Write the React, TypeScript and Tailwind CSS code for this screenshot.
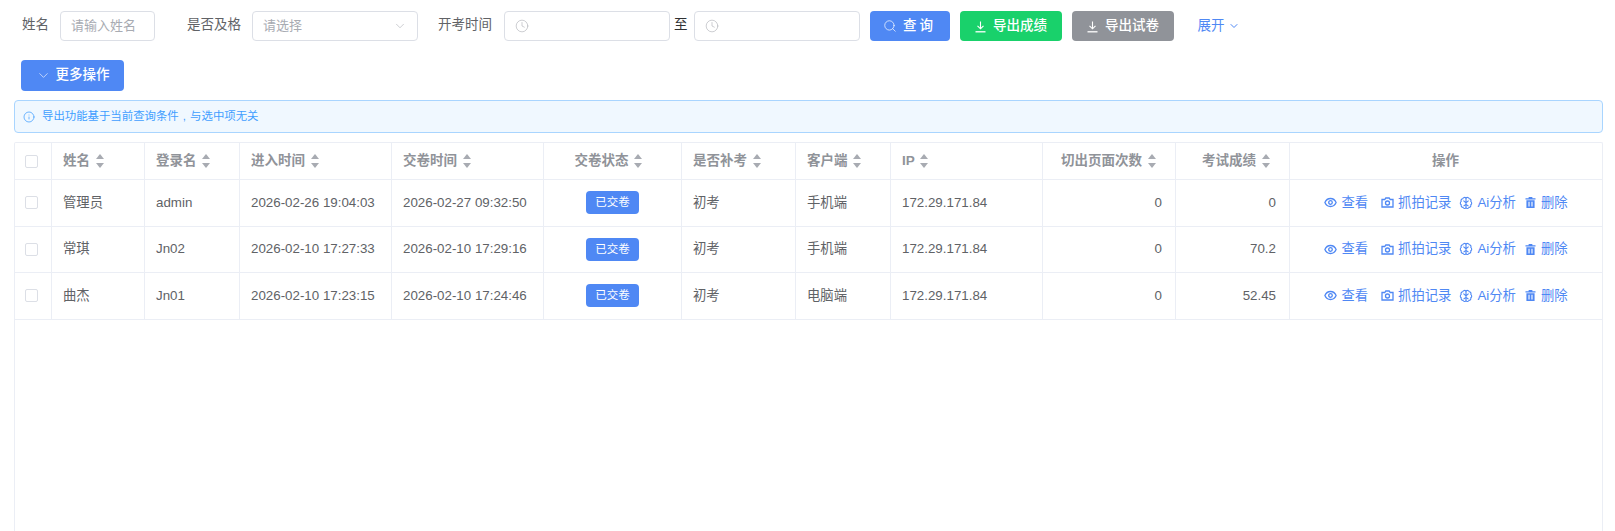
import { ChevronDown, Info, Search, Clock } from "lucide-react";

const font = "font-['Liberation_Sans','Noto_Sans_CJK_SC',sans-serif]";

const rows = [
  { name: "管理员", login: "admin", enter: "2026-02-26 19:04:03", submit: "2026-02-27 09:32:50", client: "手机端", score: "0" },
  { name: "常琪", login: "Jn02", enter: "2026-02-10 17:27:33", submit: "2026-02-10 17:29:16", client: "手机端", score: "70.2" },
  { name: "曲杰", login: "Jn01", enter: "2026-02-10 17:23:15", submit: "2026-02-10 17:24:46", client: "电脑端", score: "52.45" },
];

function SortCaret() {
  return (
    <span className="ml-[5px] mr-[7px] inline-flex h-[14px] w-[9px] flex-col items-center justify-between align-middle">
      <span className="h-0 w-0 border-x-[4.5px] border-b-[5px] border-x-transparent border-b-[#a8abb2]" />
      <span className="h-0 w-0 border-x-[4.5px] border-t-[5px] border-x-transparent border-t-[#a8abb2]" />
    </span>
  );
}

function Check() {
  return <span className="block h-[13px] w-[13px] rounded-[2px] border border-[#dcdfe6] bg-white" />;
}

function DownloadIcon() {
  return (
    <svg width="13" height="13" viewBox="0 0 13 13" fill="none" stroke="currentColor" strokeWidth="1.1">
      <path d="M6.5 1.500V8.500M3.500 5.800 6.500 8.800 9.500 5.800" />
      <path d="M1.500 11.800H11.500" strokeWidth="1.300" />
    </svg>
  );
}

function EyeIcon() {
  return (
    <svg width="13" height="13" viewBox="0 0 13 13" fill="none" stroke="currentColor" strokeWidth="1.3">
      <path d="M.9 6.500C2 3.900 4 2.500 6.500 2.500s4.500 1.400 5.600 4C11 9.100 9 10.500 6.500 10.500S2 9.100.9 6.500Z" />
      <circle cx="6.500" cy="6.500" r="1.800" />
    </svg>
  );
}

function CameraIcon() {
  return (
    <svg width="13" height="13" viewBox="0 0 13 13" fill="none" stroke="currentColor" strokeWidth="1.3">
      <path d="M1 3.500h2.800L4.800 2h3.400l1 1.500H12v7.500H1V3.500Z" />
      <circle cx="6.500" cy="7" r="2" />
    </svg>
  );
}

function BrainIcon() {
  return (
    <svg width="14" height="14" viewBox="0 0 14 14" fill="none" stroke="currentColor" strokeWidth="1.100">
      <path d="M7 2.200C6.200 1 4.200 1.200 3.800 2.700 2.400 2.800 1.600 4.200 2.200 5.400 1 6.300 1 8 2.200 8.800 1.800 10.200 2.800 11.400 4 11.400 4.600 12.800 6.400 12.900 7 11.700 7.600 12.900 9.400 12.800 10 11.400 11.200 11.400 12.200 10.200 11.800 8.800 13 8 13 6.300 11.800 5.400 12.400 4.200 11.600 2.800 10.200 2.700 9.800 1.200 7.800 1 7 2.200Z" />
      <path d="M7 2.200V11.700M7 6.800 4.400 4.600M7 6.800 9.600 4.600M7 8.400 4.600 10M7 8.400 9.400 10" />
    </svg>
  );
}

function TrashIcon() {
  return (
    <svg width="13" height="13" viewBox="0 0 14 14" fill="currentColor">
      <path d="M5 1h4v1.400h3.400v1.500H1.600V2.400H5V1Z" />
      <path d="M2.600 4.600h8.800V13H2.600V4.600Zm2.200 1.600v5h1.200v-5H4.800Zm3.200 0v5h1.200v-5H8Z" />
    </svg>
  );
}

function Action({ icon, label, className }: { icon: React.ReactNode; label: string; className?: string }) {
  return (
    <span className={`inline-flex items-center gap-[4px] ${className ?? ""}`}>
      {icon}
      <span>{label}</span>
    </span>
  );
}

function Th({ children, className }: { children?: React.ReactNode; className?: string }) {
  return (
    <th className={`h-[37px] border-r border-b border-[#ebeef5] pl-[11px] pr-[12px] text-[13.500px] font-bold text-[#909399] ${className ?? ""}`}>
      {children}
    </th>
  );
}

function Td({ children, className }: { children?: React.ReactNode; className?: string }) {
  return (
    <td className={`h-[46.500px] border-r border-b border-[#ebeef5] pl-[11px] pr-[13px] text-[13.33px] text-[#606266] ${className ?? ""}`}>
      {children}
    </td>
  );
}

export default function App() {
  return (
    <div className={`flex h-screen flex-col overflow-hidden bg-white ${font}`}>
      <div className="flex h-[52px] items-start pt-[11px] text-[13.500px] text-[#606266]">
        <span className="ml-[22px] mr-[11px] leading-[28px]">姓名</span>
        <div className="flex h-[30px] w-[95px] items-center rounded-[4px] border border-[#dcdfe6] pl-[10px] text-[13px] text-[#a8abb2]">请输入姓名</div>
        <span className="ml-[32px] mr-[11px] leading-[28px]">是否及格</span>
        <div className="flex h-[30px] w-[166px] items-center justify-between rounded-[4px] border border-[#dcdfe6] px-[10px] text-[13px] text-[#a8abb2]">
          请选择
          <ChevronDown size={14} strokeWidth={1} className="text-[#a8abb2]" />
        </div>
        <span className="ml-[20px] mr-[12px] leading-[28px]">开考时间</span>
        <div className="flex h-[30px] w-[166px] items-center rounded-[4px] border border-[#dcdfe6] pl-[10px]">
          <Clock size={14} strokeWidth={1} className="text-[#a8abb2]" />
        </div>
        <span className="ml-[4px] mr-[6px] leading-[28px] text-[#303133]">至</span>
        <div className="flex h-[30px] w-[166px] items-center rounded-[4px] border border-[#dcdfe6] pl-[10px]">
          <Clock size={14} strokeWidth={1} className="text-[#a8abb2]" />
        </div>
        <button className="ml-[10px] flex h-[30px] w-[80px] items-center justify-center gap-[6px] rounded-[4px] bg-[#4f88f4] font-medium text-white">
          <Search size={14} strokeWidth={1.2} />
          <span className="tracking-[3px]">查询</span>
        </button>
        <button className="ml-[10px] flex h-[30px] w-[102px] items-center justify-center gap-[6px] rounded-[4px] bg-[#19d16b] font-medium text-white">
          <DownloadIcon />
          导出成绩
        </button>
        <button className="ml-[10px] flex h-[30px] w-[102px] items-center justify-center gap-[6px] rounded-[4px] bg-[#909399] font-medium text-white">
          <DownloadIcon />
          导出试卷
        </button>
        <span className="ml-[24px] flex h-[30px] items-center gap-[3px] text-[#4f88f4]">
          展开
          <ChevronDown size={12} strokeWidth={2} />
        </span>
      </div>

      <button className="ml-[21px] mt-[8px] flex h-[31px] w-[103px] items-center justify-center gap-[5px] rounded-[4px] bg-[#4f88f4] text-[13.500px] font-medium text-white">
        <ChevronDown size={15} strokeWidth={1} />
        更多操作
      </button>

      <div className="ml-[14px] mr-[12px] mt-[9px] flex h-[33px] shrink-0 items-center gap-[7px] rounded-[4px] border border-[#a9d5ff] bg-[#f0f8ff] pl-[8px] text-[11.400px] text-[#409eff]">
        <Info size={12} strokeWidth={1.5} />
        <span>
          导出功能基于当前查询条件
          <span className="inline-block w-[1em] text-center">,</span>
          与选中项无关
        </span>
      </div>

      <div className="ml-[14px] mr-[12px] mt-[9px] flex-1 rounded-t-[2px] border border-b-0 border-[#ebeef5]">
        <table className="w-full table-fixed border-separate border-spacing-0">
          <colgroup>
            <col className="w-[37px]" />
            <col className="w-[93px]" />
            <col className="w-[95px]" />
            <col className="w-[152px]" />
            <col className="w-[152px]" />
            <col className="w-[138px]" />
            <col className="w-[114px]" />
            <col className="w-[95px]" />
            <col className="w-[152px]" />
            <col className="w-[133px]" />
            <col className="w-[114px]" />
            <col />
          </colgroup>
          <thead>
            <tr>
              <Th className="!px-[10px]"><Check /></Th>
              <Th className="text-left">姓名<SortCaret /></Th>
              <Th className="text-left">登录名<SortCaret /></Th>
              <Th className="text-left">进入时间<SortCaret /></Th>
              <Th className="text-left">交卷时间<SortCaret /></Th>
              <Th className="text-center">交卷状态<SortCaret /></Th>
              <Th className="text-left">是否补考<SortCaret /></Th>
              <Th className="text-left">客户端<SortCaret /></Th>
              <Th className="text-left">IP<SortCaret /></Th>
              <Th className="text-right">切出页面次数<SortCaret /></Th>
              <Th className="text-right">考试成绩<SortCaret /></Th>
              <Th className="border-r-0 text-center">操作</Th>
            </tr>
          </thead>
          <tbody>
            {rows.map((r) => (
              <tr key={r.login}>
                <Td className="!px-[10px]"><Check /></Td>
                <Td>{r.name}</Td>
                <Td>{r.login}</Td>
                <Td>{r.enter}</Td>
                <Td>{r.submit}</Td>
                <Td className="!px-[12px] text-center">
                  <span className="inline-flex h-[23px] items-center rounded-[4px] bg-[#4f88f4] px-[9px] text-[11.500px] text-white">已交卷</span>
                </Td>
                <Td>初考</Td>
                <Td>{r.client}</Td>
                <Td>172.29.171.84</Td>
                <Td className="text-right">0</Td>
                <Td className="text-right">{r.score}</Td>
                <Td className="!px-[12px] border-r-0 text-center">
                  <div className="flex items-center justify-center text-[#4f88f4]">
                    <Action icon={<EyeIcon />} label="查看" />
                    <Action icon={<CameraIcon />} label="抓拍记录" className="ml-[13px]" />
                    <Action icon={<BrainIcon />} label="Ai分析" className="ml-[8px]" />
                    <Action icon={<TrashIcon />} label="删除" className="ml-[8px]" />
                  </div>
                </Td>
              </tr>
            ))}
          </tbody>
        </table>
      </div>
    </div>
  );
}
